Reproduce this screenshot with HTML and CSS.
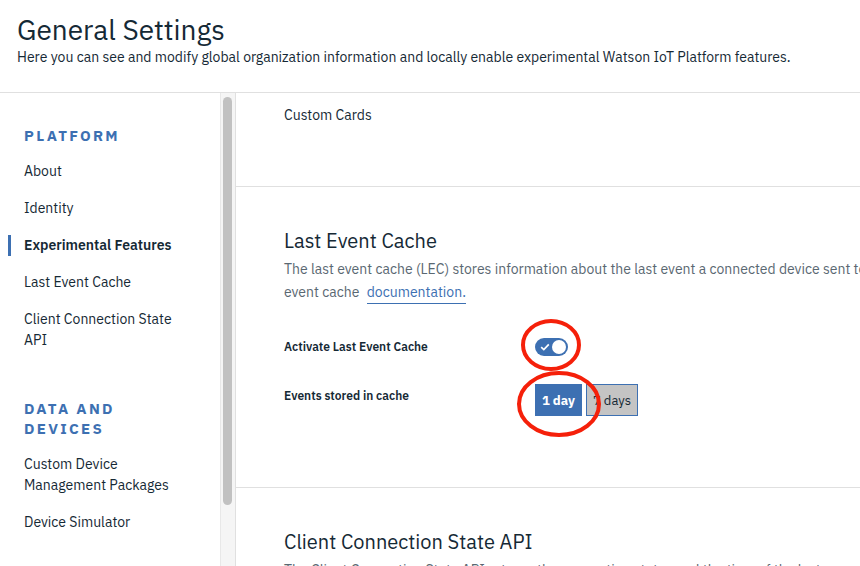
FILE: index.html
```html
<!DOCTYPE html>
<html lang="en">
<head>
<meta charset="utf-8">
<title>General Settings</title>
<link rel="stylesheet" href="styles.css">
</head>
<body>
<header class="page-header">
  <h1 class="page-title">General Settings</h1>
  <p class="page-subtitle">Here you can see and modify global organization information and locally enable experimental Watson IoT Platform features.</p>
</header>
<div class="layout">
  <nav class="sidebar">
    <div class="nav-group">
      <h2 class="nav-heading">PLATFORM</h2>
      <a class="nav-item">About</a>
      <a class="nav-item">Identity</a>
      <a class="nav-item nav-item--active">Experimental Features</a>
      <a class="nav-item">Last Event Cache</a>
      <a class="nav-item">Client Connection State API</a>
    </div>
    <div class="nav-group">
      <h2 class="nav-heading">DATA AND DEVICES</h2>
      <a class="nav-item">Custom Device Management Packages</a>
      <a class="nav-item">Device Simulator</a>
    </div>
  </nav>
  <div class="scrollbar"><div class="scrollbar-thumb"></div></div>
  <main class="content">
    <section class="section section--tail">
      <p class="plain-text">Custom Cards</p>
    </section>
    <section class="section">
      <h3 class="section-title">Last Event Cache</h3>
      <p class="section-desc">The last event cache (LEC) stores information about the last event a connected device sent to Watson IoT Platform. For more information, see the last<br>event cache <a class="link">documentation.</a></p>
      <div class="form-row form-row--center">
        <span class="form-label">Activate Last Event Cache</span>
        <span class="toggle">
          <svg class="toggle-check" width="10" height="8" viewBox="0 0 10 8"><path d="M1.2 4.2 L3.8 6.6 L8.8 1.4" fill="none" stroke="#fff" stroke-width="1.7"/></svg>
          <span class="toggle-knob"></span>
        </span>
      </div>
      <div class="form-row">
        <span class="form-label form-label--offset">Events stored in cache</span>
        <div class="btn-group">
          <button class="seg-btn seg-btn--selected">1 day</button>
          <button class="seg-btn">7 days</button>
        </div>
      </div>
    </section>
    <section class="section">
      <h3 class="section-title">Client Connection State API</h3>
      <p class="section-desc">The Client Connection State API returns the connection status and the time of the last connect or disconnect event for a device or application.</p>
    </section>
  </main>
</div>
<svg class="annotations" width="860" height="566" viewBox="0 0 860 566">
  <ellipse cx="551" cy="345" rx="28" ry="24" fill="none" stroke="#f5200a" stroke-width="4"/>
  <ellipse cx="559" cy="404" rx="40" ry="31" fill="none" stroke="#f5200a" stroke-width="4"/>
</svg>
</body>
</html>
```
FILE: styles.css
```css
* { box-sizing: border-box; }
html, body { margin: 0; padding: 0; }
body {
  width: 860px;
  height: 566px;
  overflow: hidden;
  background: #fff;
  color: #152935;
  font-family: "IBM Plex Sans", Roboto, "Liberation Sans", sans-serif;
  position: relative;
}
.page-header {
  padding: 13px 17px 25px;
  border-bottom: 1px solid #e0e0e0;
  height: 93px;
}
.page-title {
  margin: 0;
  font-size: 28px;
  line-height: 34px;
  font-weight: 400;
  color: #152935;
}
.page-subtitle {
  margin: 0;
  font-size: 14px;
  line-height: 20px;
  color: #152935;
  white-space: nowrap;
}
.layout {
  display: flex;
  height: 473px;
  overflow: hidden;
}
.sidebar {
  flex: none;
  width: 220px;
  padding-top: 33px;
}
.nav-group { display: flex; flex-direction: column; }
.nav-group + .nav-group { margin-top: 40px; }
.nav-heading {
  margin: 0 0 7px;
  padding: 0 24px;
  font-size: 15px;
  line-height: 20px;
  font-weight: 700;
  letter-spacing: 2.3px;
  color: #3d70b2;
}
.nav-item {
  position: relative;
  display: block;
  padding: 8px 30px 8px 24px;
  font-size: 14px;
  line-height: 21px;
  color: #152935;
}
.nav-item--active { font-weight: 600; }
.nav-item--active::before {
  content: "";
  position: absolute;
  left: 8px;
  top: 8px;
  width: 3px;
  height: 21px;
  background: #3d70b2;
}
.scrollbar {
  flex: none;
  width: 16px;
  background: #f5f5f5;
  border-left: 1px solid #e8e8e8;
  border-right: 1px solid #e0e0e0;
  padding: 4px 2px 0 2px;
}
.scrollbar-thumb {
  width: 9px;
  height: 408px;
  background: #c1c1c1;
  border-radius: 5px;
}
.content {
  flex: none;
  width: 1100px;
}
.section {
  padding: 42px 48px 71px;
  border-top: 1px solid #e0e0e0;
}
.section--tail {
  border-top: 0;
  padding: 12px 48px 61px;
}
.plain-text {
  margin: 0;
  font-size: 14px;
  line-height: 20px;
}
.section-title {
  margin: 0 0 5px;
  font-size: 20px;
  line-height: 24px;
  font-weight: 400;
  color: #152935;
}
.section-desc {
  margin: 0;
  font-size: 14px;
  line-height: 23px;
  color: #5a6872;
  white-space: nowrap;
}
.link {
  color: #3d70b2;
  margin-left: 4px;
  border-bottom: 1px solid #3d70b2;
  padding-bottom: 2px;
}
.form-row {
  display: flex;
  align-items: flex-start;
  margin-top: 28px;
}
.form-row--center { align-items: center; margin-top: 34px; }
.form-label {
  width: 251px;
  flex: none;
  font-size: 12px;
  line-height: 16px;
  font-weight: 600;
  color: #152935;
}
.form-label--offset { padding-top: 4px; }
.toggle {
  width: 33px;
  height: 18px;
  border-radius: 9px;
  background: #3d70b2;
  display: flex;
  align-items: center;
  justify-content: space-between;
  padding: 0 2px 0 5px;
}
.toggle-check { display: block; }
.toggle-knob {
  width: 14px;
  height: 14px;
  border-radius: 50%;
  background: #fff;
}
.btn-group { display: flex; gap: 4px; }
.seg-btn {
  height: 32px;
  width: 52px;
  padding: 0;
  font-family: inherit;
  font-size: 13px;
  border: 1px solid #3d70b2;
  background: #c4c4c4;
  color: #152935;
  border-radius: 0;
}
.seg-btn--selected {
  background: #3d70b2;
  color: #fff;
  font-weight: 700;
  width: 47px;
}
.annotations {
  position: absolute;
  left: 0;
  top: 0;
  pointer-events: none;
}
```
